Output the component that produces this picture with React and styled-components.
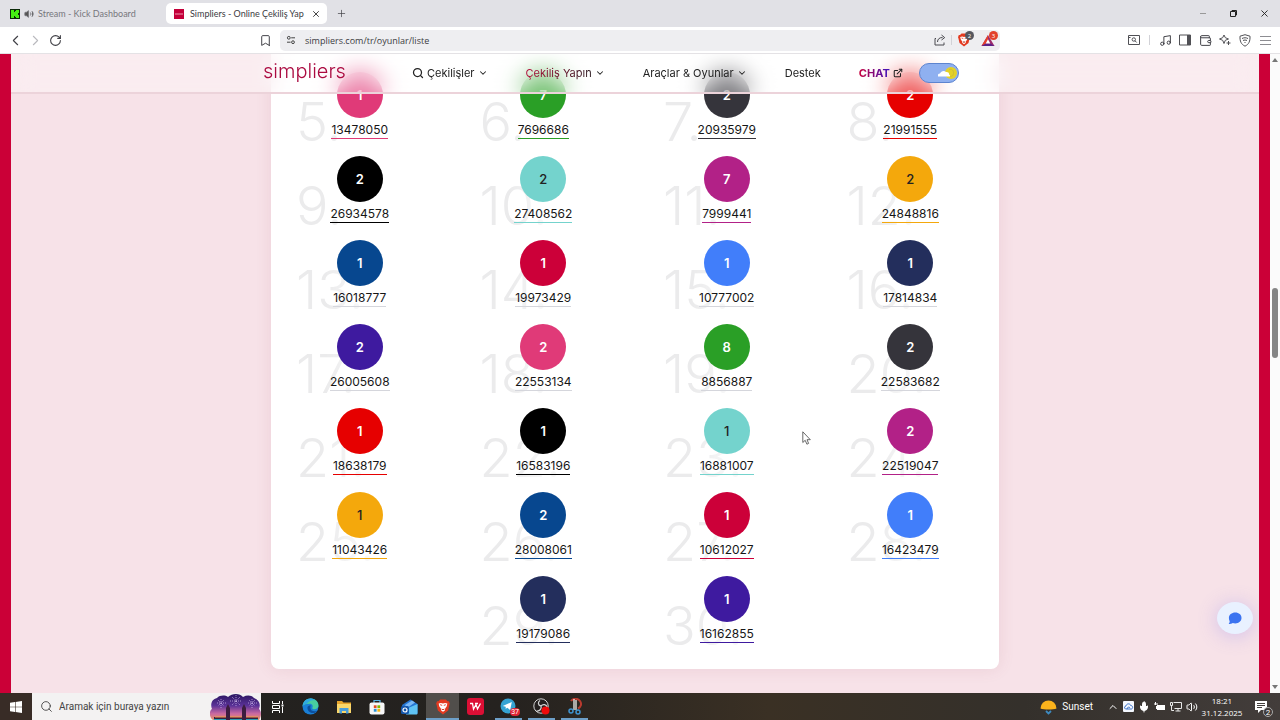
import React from 'react';
import styled, { createGlobalStyle, css } from 'styled-components';
import {
    Bookmark, ChevronDown, ChevronUp, ChevronLeft, ChevronRight, ExternalLink, Mic, Music, Plus,
    RotateCw, Search, Volume2, X, Wallet
} from 'lucide-react';


const colors = {
    pink: '#e03a78',
    green: '#2a9f26',
    charcoal: '#35343b',
    red: '#e60000',
    black: '#000000',
    teal: '#74d3cd',
    magenta: '#b22187',
    amber: '#f4a80c',
    blue: '#07478f',
    crimson: '#cc0039',
    sky: '#417efa',
    navy: '#232e5c',
    violet: '#3e1a9f'
};

const winners = [
    { rank: 5, count: 1, id: '13478050', color: 'pink' },
    { rank: 6, count: 7, id: '7696686', color: 'green' },
    { rank: 7, count: 2, id: '20935979', color: 'charcoal' },
    { rank: 8, count: 2, id: '21991555', color: 'red' },
    { rank: 9, count: 2, id: '26934578', color: 'black' },
    { rank: 10, count: 2, id: '27408562', color: 'teal' },
    { rank: 11, count: 7, id: '7999441', color: 'magenta' },
    { rank: 12, count: 2, id: '24848816', color: 'amber' },
    { rank: 13, count: 1, id: '16018777', color: 'blue' },
    { rank: 14, count: 1, id: '19973429', color: 'crimson' },
    { rank: 15, count: 1, id: '10777002', color: 'sky' },
    { rank: 16, count: 1, id: '17814834', color: 'navy' },
    { rank: 17, count: 2, id: '26005608', color: 'violet' },
    { rank: 18, count: 2, id: '22553134', color: 'pink' },
    { rank: 19, count: 8, id: '8856887', color: 'green' },
    { rank: 20, count: 2, id: '22583682', color: 'charcoal' },
    { rank: 21, count: 1, id: '18638179', color: 'red' },
    { rank: 22, count: 1, id: '16583196', color: 'black' },
    { rank: 23, count: 1, id: '16881007', color: 'teal' },
    { rank: 24, count: 2, id: '22519047', color: 'magenta' },
    { rank: 25, count: 1, id: '11043426', color: 'amber' },
    { rank: 26, count: 2, id: '28008061', color: 'blue' },
    { rank: 27, count: 1, id: '10612027', color: 'crimson' },
    { rank: 28, count: 1, id: '16423479', color: 'sky' },
    { rank: 29, count: 1, id: '19179086', color: 'navy' },
    { rank: 30, count: 1, id: '16162855', color: 'violet' }
];

// rows whose underline is a pale grey instead of the ball colour
const isPale = (rank) => rank >= 13 && rank <= 20;
const hasDarkText = (color) => color === 'teal' || color === 'amber';


const KickIcon = () => (
    <svg width='10' height='10' viewBox='0 0 10 10' aria-hidden='true'>
        <rect width='10' height='10' fill='#0b2a08' />
        <path d='M1 1h3v2h1V2h1V1h3v3H8v2h1v3H6V8H5V7H4v2H1z' fill='#45f013' />
    </svg>
);

const SimpliersIcon = () => (
    <svg width='10' height='10' viewBox='0 0 10 10' aria-hidden='true'>
        <rect width='10' height='10' fill='#c4003a' />
        <path d='M1 5h8' stroke='#ee9db4' strokeWidth='1' />
    </svg>
);

const RestoreIcon = () => (
    <svg width='9' height='9' viewBox='0 0 9 9' fill='none' stroke='#222' aria-hidden='true'>
        <path d='M1.5 2.5h5v5h-5zM3 2.5v-1h4.5V6h-1' />
    </svg>
);

const TuneIcon = () => (
    <svg width='10' height='10' viewBox='0 0 10 10' fill='none' stroke='#444' aria-hidden='true'>
        <circle cx='2.8' cy='2.8' r='1.4' />
        <path d='M5.2 2.8H9M1 7.2h3.6' />
        <circle cx='7' cy='7.2' r='1.4' />
    </svg>
);

const ShareIcon = () => (
    <svg width='12' height='12' viewBox='0 0 12 12' fill='none' stroke='#4a4a50' aria-hidden='true'>
        <path d='M2 4.500H1v6.500h9V8.500M3.500 8c0-3 2-4.500 5-4.500M7.500 1l3.200 2.600L7.500 6' />
    </svg>
);

const BraveIcon = ({ size = 14 }) => (
    <svg width={size} height={size} viewBox='0 0 14 14' aria-hidden='true'>
        <path d='M4.500.5h5L11 2h1.200l.8 2.200-.4 1L11.500 10 7 13.500 2.500 10 1.400 5.200 1 4.200 1.800 2H3z' fill='#e33a20' />
        <path d='M3.200 4l2-.5 1.800.5 1.800-.5 2 .5-.6 2.500L9 8.200 8.600 10 7 11.200 5.400 10 5 8.200 3.800 6.500z' fill='#fff' />
        <path d='M4.500 5l1.800.6M9.500 5l-1.800.6M5.800 8.800L7 9.400l1.200-.6' stroke='#e33a20' strokeWidth='.8' />
    </svg>
);

const RewardsIcon = () => (
    <svg width='14' height='13' viewBox='0 0 14 13' aria-hidden='true'>
        <path d='M7 1L.5 12h13z' fill='#9d2a6b' />
        <path d='M7 1L.5 12 5 9.500 7 5.500z' fill='#e6402a' />
        <path d='M.5 12h13L9.500 9.500H5z' fill='#5b2287' />
        <path d='M7 5.200L4.700 9.500h4.600z' fill='#fff' />
    </svg>
);

const WindowSearchIcon = () => (
    <svg width='12' height='12' viewBox='0 0 12 12' fill='none' stroke='#505055' aria-hidden='true'>
        <path d='M.5 1.500h11v9H.5zM.5 3.500h2' />
        <circle cx='5.800' cy='5.500' r='1.700' />
        <path d='M7 6.800l1.700 1.700' />
    </svg>
);

const SidePanelIcon = () => (
    <svg width='12' height='12' viewBox='0 0 12 12' aria-hidden='true'>
        <path d='M.5 1h11v10H.5z' fill='none' stroke='#505055' />
        <path d='M8 1h3.500v10H8z' fill='#505055' />
    </svg>
);

const SparkleIcon = () => (
    <svg width='12' height='12' viewBox='0 0 12 12' fill='none' stroke='#505055' strokeLinejoin='round' aria-hidden='true'>
        <path d='M5 1l1.300 2.700L9.500 5 6.300 6.300 5 9.500 3.700 6.300.5 5l3.200-1.300z' />
        <path d='M9.500 7v4M7.500 9h4' />
    </svg>
);

const ShieldIcon = () => (
    <svg width='12' height='13' viewBox='0 0 12 13' fill='none' stroke='#505055' aria-hidden='true'>
        <path d='M6 .7l5 1.500c.2 5-1 8-5 10-4-2-5.200-5-5-10z' />
        <path d='M3 4.500c2-1 4-1 6 0M4 6.500c1.300-.6 2.700-.6 4 0M5.500 8.500h1' />
    </svg>
);

const MenuIcon = () => (
    <svg width='11' height='11' viewBox='0 0 11 11' stroke='#8d8d92' aria-hidden='true'>
        <path d='M0 1.500h11M0 5.500h11M0 9.500h11' />
    </svg>
);

const CloudSunIcon = () => (
    <svg width='20' height='16' viewBox='0 0 20 16' aria-hidden='true'>
        <circle cx='13' cy='8' r='6' fill='#e3d127' />
        <path d='M11 4.500c2.500-1 5 1 4.500 4s-3 3.500-4.500 2.500' fill='none' stroke='#cdbb3a' />
        <path d='M0 11.500c-1-1.500.3-3 2-3C3 6 6 5 8 7c2-.4 3.500 1 3 2.500 1 .4 1.300 1.200 1 2z' fill='#fff' />
    </svg>
);

const BubbleIcon = () => (
    <svg width='14' height='13' viewBox='0 0 14 13' aria-hidden='true'>
        <path d='M7.300.6c3.600 0 6.200 2.300 6.200 5.400s-2.600 5.400-6.200 5.400c-.9 0-1.800-.2-2.600-.5-1 .8-2.400 1-4 1 .7-.8 1.100-1.700 1-2.600C1.200 8.400.9 7.300.9 6 .9 2.900 3.700.6 7.300.6z' fill='#3b73f0' />
    </svg>
);

const CursorIcon = () => (
    <svg width='9' height='14' viewBox='0 0 9 14' aria-hidden='true'>
        <path d='M.8.800v10.700l2.400-2.200 1.700 3.900 1.700-.8L5 8.700h3.300z' fill='#fff' stroke='#444' strokeWidth='.8' />
    </svg>
);

const WindowsIcon = () => (
    <svg width='12' height='12' viewBox='0 0 12 12' fill='#fff' aria-hidden='true'>
        <path d='M0 1.700l5-.7v4.700H0zM5.600.9L12 0v5.700H5.600zM0 6.300h5V11l-5-.7zM5.600 6.300H12V12l-6.400-.9z' />
    </svg>
);

const FireworksArt = () => (
    <svg width='51' height='26' viewBox='0 0 51 26' aria-hidden='true'>
        <defs>
            <linearGradient id='dusk' x1='0' y1='0' x2='0' y2='1'>
                <stop offset='0' stopColor='#2a1560' />
                <stop offset='.45' stopColor='#5b3298' />
                <stop offset='.75' stopColor='#c868a0' />
                <stop offset='1' stopColor='#e99268' />
            </linearGradient>
        </defs>
        <path d='M3 26C-1 23-1 17 2 15c-2-5 0-10 5-11 3-3 8-3 11-1 4-4 12-4 15 0 4-2 8-2 11 1 5 2 7 6 5 11 3 3 2 8 0 11z' fill='url(#dusk)' />
        <path d='M4 26v-3h12v-9l2-4 2 4v9h12v-9l2-4 2 4v9h12v3z' fill='#3b1d3e' />
        <path d='M5 23h11M20 23h12M36 23h12' stroke='#ef9a4a' />
        <path d='M4 25.500h12M20 25.500h12M36 25.500h12' stroke='#28a0b4' />
        <g stroke='#e7d7ff' strokeWidth='.6' strokeDasharray='1 1'>
            <path d='M26 1v12M20 7h12M22 3l8 8M30 3l-8 8M11 5v9M7 9h9M8 6l6 6M14 6l-6 6M42 5v9M38 9h9M39 6l6 6M45 6l-6 6' />
        </g>
    </svg>
);

const TaskViewIcon = () => (
    <svg width='12' height='12' viewBox='0 0 12 12' fill='none' stroke='#fff' aria-hidden='true'>
        <path d='M.5 0v2.500h7V0M.5 4.500h7v3h-7zM.5 12V9.500h7V12M10.500 0v3M10.500 6v6' />
        <path d='M9.500 3.500h2v2h-2z' fill='#fff' stroke='none' />
    </svg>
);

const EdgeIcon = () => (
    <svg width='17' height='17' viewBox='0 0 17 17' aria-hidden='true'>
        <circle cx='8.500' cy='8.500' r='8' fill='#1a7fd6' />
        <path d='M.6 8C1 3.500 4.500.5 8.500.5c4.500 0 8 3 8 6.800 0 2.500-2 4-4.200 4-1.500 0-2.500-.7-2-1.500 1-1.500.2-4-2.600-4C4.500 5.800 1.500 6.500.6 8z' fill='#48ce9f' />
        <path d='M.6 8C1 3.500 4.500.5 8.500.5c2 0 3.500.6 5 1.600C10 2 7 3 5 5.800 3 6 1.300 7 .6 8z' fill='#2fa9e0' />
        <path d='M5.500 9c-.5 4 3 6.500 6.500 6 1.500-.3 2.600-1 3.300-2.200-3 1.400-7 .2-7-3.300 0-1.200.6-1.800 1-2-1.800-.3-3.500.2-3.800 1.500z' fill='#0c4f9d' />
    </svg>
);

const FolderIcon = () => (
    <svg width='16' height='14' viewBox='0 0 16 14' aria-hidden='true'>
        <path d='M1 1h5l1.500 1.500H15V13H1z' fill='#e8a52c' />
        <path d='M1 4h14v9H1z' fill='#fbd76a' />
        <path d='M3.500 8h9v5.500h-2.500V11H6v2.500H3.500z' fill='#4a9edb' />
    </svg>
);

const StoreIcon = () => (
    <svg width='16' height='16' viewBox='0 0 16 16' aria-hidden='true'>
        <path d='M5 4V1.500h6V4' fill='none' stroke='#5bb8e8' strokeWidth='1.200' />
        <rect x='.5' y='3.500' width='15' height='12' rx='2' fill='#f7f7f7' />
        <path d='M4.800 6.300h2.800v2.800H4.800z' fill='#e44c26' />
        <path d='M8.400 6.300h2.800v2.800H8.400z' fill='#7fba00' />
        <path d='M4.800 9.900h2.800v2.800H4.800z' fill='#2a93d5' />
        <path d='M8.400 9.900h2.800v2.800H8.400z' fill='#f6b513' />
    </svg>
);

const OutlookIcon = () => (
    <svg width='17' height='16' viewBox='0 0 17 16' aria-hidden='true'>
        <path d='M1 6l8.500-5.500L16.500 5v9.500H3z' fill='#2474d2' />
        <path d='M6 9.500L16.500 5v9c0 1-.5 1.500-1.500 1.500H5z' fill='#5fc3f4' />
        <path d='M4 6l7-4.500 3 2L6 9z' fill='#7ab8f5' />
        <rect x='0' y='7' width='8' height='8' rx='1.500' fill='#1557ac' />
        <circle cx='4' cy='11' r='2' fill='none' stroke='#fff' strokeWidth='1.200' />
    </svg>
);

const WpsIcon = () => (
    <svg width='17' height='17' viewBox='0 0 17 17' aria-hidden='true'>
        <rect width='17' height='17' rx='3' fill='#dc0f35' />
        <path d='M3 5.500h2.500L6.500 11l2.500-4.500L10.500 11 13.500 5.500M8 5.500h3' fill='none' stroke='#fff' strokeWidth='1.300' />
    </svg>
);

const TelegramIcon = () => (
    <svg width='18' height='18' viewBox='0 0 18 18' aria-hidden='true'>
        <circle cx='8' cy='8' r='7.500' fill='#35a3d3' />
        <path d='M2.800 8l9-4-1.600 8-3-2.200-1.500 1.300v-2.300z' fill='#fff' />
    </svg>
);

const ObsIcon = () => (
    <svg width='17' height='17' viewBox='0 0 17 17' fill='none' aria-hidden='true'>
        <circle cx='8' cy='8' r='7.200' fill='#24201f' stroke='#d3d3d3' />
        <path d='M8 8C5 7.500 4.500 4 7 2.500M8 8c2-2.500 5.500-1.500 6 1M8 8c1 3-1.500 5.500-4.500 5' stroke='#d3d3d3' strokeWidth='1.300' />
        <circle cx='12.500' cy='12.500' r='4' fill='#ef0a0a' />
    </svg>
);

const SnipIcon = () => (
    <svg width='16' height='17' viewBox='0 0 16 17' fill='none' aria-hidden='true'>
        <path d='M4 3C6 0 11 0 13 3s1 6-2 7.500' stroke='#b93a2e' strokeWidth='2' />
        <path d='M7 1v11M9 2v10' stroke='#f0f0f0' strokeWidth='1.300' />
        <circle cx='4' cy='13' r='2' stroke='#3f94d1' strokeWidth='1.500' />
        <circle cx='11' cy='14' r='2' stroke='#3f94d1' strokeWidth='1.500' />
    </svg>
);

const SunsetIcon = () => (
    <svg width='17' height='17' viewBox='0 0 17 17' aria-hidden='true'>
        <path d='M.5 10.500a8 8 0 1 1 16 0c-3 1.300-13 1.300-16 0z' fill='#fbb31c' />
        <path d='M6 13l2.500 2.500L11 13' fill='none' stroke='#3d8ac0' strokeWidth='1.800' />
    </svg>
);

const CloudTrayIcon = () => (
    <svg width='11' height='11' viewBox='0 0 11 11' aria-hidden='true'>
        <rect width='11' height='11' rx='1' fill='#f4f8ff' />
        <path d='M2.500 8C.8 7 1.500 5 3 5c.3-2.500 4-3 4.700-.5C10 4.500 10.200 7.500 8.500 8zM4 8c0-2 2.500-2.500 3-1' fill='none' stroke='#3c73c9' />
    </svg>
);

const BatteryIcon = () => (
    <svg width='12' height='10' viewBox='0 0 12 10' aria-hidden='true'>
        <path d='M3 3h8v5H3z' fill='#fff' />
        <path d='M0 2h4M1.500 0v3M2.500 4v3' stroke='#fff' />
    </svg>
);

const NetworkIcon = () => (
    <svg width='12' height='11' viewBox='0 0 12 11' fill='none' stroke='#e8e8e8' aria-hidden='true'>
        <path d='M3.500 1.500h8v6h-7M8 8v2M5.500 10h5M.5 1.500h2v3h-2zM1.500 5v4.500H4' />
    </svg>
);

const NoticeIcon = () => (
    <svg width='12' height='12' viewBox='0 0 12 12' aria-hidden='true'>
        <path d='M0 0h12v9H6l-3 3V9H0z' fill='#fff' />
        <path d='M2 2.500h8M2 4.500h8M2 6.500h5' stroke='#45403d' />
    </svg>
);


const Winner = ({ rank, count, id, color }) => (
    <WinnerItem>
        <Rank>{rank}.</Rank>
        <Ball $color={colors[color]} $dark={hasDarkText(color)}>{count}</Ball>
        <WinnerLink href='#' $color={isPale(rank) ? '#d5d6dc' : colors[color]}>{id}</WinnerLink>
    </WinnerItem>
);

const BrowserTabs = () => (
    <TabStrip>
        <Tab $quiet>
            <KickIcon />
            <Volume2 size={10} fill='#555' />
            <span>Stream - Kick Dashboard</span>
        </Tab>
        <Tab $active>
            <SimpliersIcon />
            <span>Simpliers - Online Çekiliş Yap</span>
            <TabClose aria-label='Close tab'><X size={10} /></TabClose>
        </Tab>
        <NewTab aria-label='New tab'><Plus size={11} strokeWidth={1.500} /></NewTab>
        <WindowControls>
            <WindowButton aria-label='Minimize'><Dash /></WindowButton>
            <WindowButton aria-label='Restore'><RestoreIcon /></WindowButton>
            <WindowButton aria-label='Close'><X size={11} strokeWidth={2} /></WindowButton>
        </WindowControls>
    </TabStrip>
);

const BrowserToolbar = () => (
    <Toolbar>
        <ToolGroup>
            <IconButton aria-label='Back'><ChevronLeft size={17} strokeWidth={1.500} /></IconButton>
            <IconButton aria-label='Forward' $muted><ChevronRight size={17} strokeWidth={1.500} /></IconButton>
            <IconButton aria-label='Reload'><RotateCw size={13} strokeWidth={2} /></IconButton>
            <Spacer />
            <IconButton aria-label='Bookmark'><Bookmark size={13} strokeWidth={1.800} /></IconButton>
        </ToolGroup>
        <AddressBar>
            <TuneIcon />
            <AddressInput aria-label='Address' defaultValue='simpliers.com/tr/oyunlar/liste' spellCheck={false} />
            <ShareIcon />
            <Divider $tight />
            <BadgeButton aria-label='Shields'><BraveIcon /><Count $color='#55565e'>2</Count></BadgeButton>
            <BadgeButton aria-label='Rewards'><RewardsIcon /><Count $color='#e2412c'>3</Count></BadgeButton>
        </AddressBar>
        <ToolGroup $end>
            <IconButton aria-label='Search tabs'><WindowSearchIcon /></IconButton>
            <Divider />
            <IconButton aria-label='Playlist'><Music size={13} strokeWidth={1.800} /></IconButton>
            <IconButton aria-label='Side panel'><SidePanelIcon /></IconButton>
            <IconButton aria-label='Wallet'><Wallet size={13} strokeWidth={1.800} /></IconButton>
            <IconButton aria-label='Assistant'><SparkleIcon /></IconButton>
            <IconButton aria-label='VPN'><ShieldIcon /></IconButton>
            <IconButton aria-label='Menu'><MenuIcon /></IconButton>
        </ToolGroup>
    </Toolbar>
);

const SiteHeader = () => (
    <Header>
        <HeaderInner>
            <Logo href='#'>simpliers</Logo>
            <NavLinks>
                <NavLink href='#'><Search size={12} strokeWidth={2.500} />Çekilişler<Caret /></NavLink>
                <NavLink href='#'><Gradient $from='#b30f3b' $to='#2a1a20'>Çekiliş Yapın</Gradient><Caret /></NavLink>
                <NavLink href='#'>Araçlar &amp; Oyunlar<Caret /></NavLink>
                <NavLink href='#'>Destek</NavLink>
                <NavLink href='#'>
                    <Gradient $from='#c8003c' $to='#3a14c0' $bold>CHAT</Gradient>
                    <ExternalLink size={10} strokeWidth={2.500} />
                </NavLink>
            </NavLinks>
            <ThemeSwitch aria-label='Theme'><CloudSunIcon /></ThemeSwitch>
        </HeaderInner>
    </Header>
);

const Caret = () => <ChevronDown size={10} strokeWidth={2.500} />;

const DesktopBar = () => (
    <Taskbar>
        <StartButton aria-label='Start'><WindowsIcon /></StartButton>
        <SearchBox>
            <Search size={13} strokeWidth={1.500} />
            <SearchInput aria-label='Search' placeholder='Aramak için buraya yazın' />
            <FireworksArt />
        </SearchBox>
        <TaskButton aria-label='Task view'><TaskViewIcon /></TaskButton>
        <TaskButton aria-label='Edge'><EdgeIcon /></TaskButton>
        <TaskButton aria-label='Explorer'><FolderIcon /></TaskButton>
        <TaskButton aria-label='Store'><StoreIcon /></TaskButton>
        <TaskButton aria-label='Mail'><OutlookIcon /></TaskButton>
        <TaskButton aria-label='Brave' $active $open><BraveIcon size={16} /></TaskButton>
        <TaskButton aria-label='WPS'><WpsIcon /></TaskButton>
        <TaskButton aria-label='Telegram' $open><TelegramIcon /><TaskBadge>37</TaskBadge></TaskButton>
        <TaskButton aria-label='OBS' $open><ObsIcon /></TaskButton>
        <TaskButton aria-label='Snipping tool' $open><SnipIcon /></TaskButton>
        <Spacer />
        <Weather><SunsetIcon />Sunset</Weather>
        <Tray>
            <ChevronUp size={12} />
            <CloudTrayIcon />
            <Mic size={12} fill='#fff' />
            <BatteryIcon />
            <NetworkIcon />
            <Volume2 size={12} />
        </Tray>
        <Clock><span>18:21</span><span>31.12.2025</span></Clock>
        <Notices aria-label='Notifications'><NoticeIcon /><NoticeCount>2</NoticeCount></Notices>
    </Taskbar>
);

const App = () => {

    return (
        <Screen>
            <GlobalStyle />
            <BrowserTabs />
            <BrowserToolbar />
            <Viewport>
                <Page>
                    <SiteHeader />
                    <Card>
                        <WinnerList>
                            {winners.map((winner) => <Winner key={winner.rank} {...winner} />)}
                        </WinnerList>
                    </Card>
                    <ChatButton aria-label='Chat'><BubbleIcon /></ChatButton>
                    <Pointer><CursorIcon /></Pointer>
                </Page>
                <ScrollTrack>
                    <ScrollArrow />
                    <ScrollThumb />
                    <ScrollArrow $down />
                </ScrollTrack>
            </Viewport>
            <DesktopBar />
        </Screen>
    );
}

export default App;

const GlobalStyle = createGlobalStyle`
    * {
        box-sizing: border-box;
    }
    body {
        margin: 0;
        overflow: hidden;
    }
    button, input {
        font: inherit;
        color: inherit;
        border: none;
        background: none;
        padding: 0;
        margin: 0;
    }
    a {
        color: inherit;
        text-decoration: none;
    }
    svg {
        flex: none;
    }
`;

const center = css`
    display: flex;
    align-items: center;
    justify-content: center;
`;

const Screen = styled.div`
    display: flex;
    flex-direction: column;
    height: 100vh;
    font-family: 'Open Sans', 'Noto Sans', sans-serif;
    font-size: 9px;
    color: #3c3c42;
    background: #fff;
`;

const Spacer = styled.div`
    flex: 1;
`;

const TabStrip = styled.div`
    display: flex;
    align-items: center;
    height: 27px;
    font-family: Lato, 'Open Sans', sans-serif;
    background: #e1e1e6;
`;

const Tab = styled.div`
    display: flex;
    align-items: center;
    gap: 6px;
    height: 21px;
    padding: 0 5px 0 8px;
    border-radius: 5px;
    white-space: nowrap;
    width: 161px;
    background: ${p => p.$active ? '#fff' : 'transparent'};

    ${p => p.$quiet && css`
        gap: 4px;
        padding-left: 10px;
        width: 166px;
        color: #77777d;
    `}
`;

const TabClose = styled.button`
    ${center}
    width: 12px;
    height: 12px;
    margin-left: auto;
    color: #222;
`;

const IconButton = styled.button`
    ${center}
    width: 20px;
    height: 20px;
    color: ${p => p.$muted ? '#b9b9be' : '#3f3f45'};
`;

const NewTab = styled(IconButton)`
    margin-left: 4px;
`;

const WindowControls = styled.div`
    display: flex;
    margin-left: auto;
`;

const WindowButton = styled.button`
    ${center}
    width: 31px;
    height: 27px;
    color: #222;
`;

const Dash = styled.span`
    width: 6px;
    height: 1px;
    background: #999;
`;

const Toolbar = styled.div`
    display: grid;
    grid-template-columns: 280px 1fr 280px;
    align-items: center;
    height: 27px;
    background: #fff;
    border-bottom: 1px solid #e4e2e5;
`;

const ToolGroup = styled.div`
    display: flex;
    align-items: center;
    padding: 0 5px;
    justify-content: ${p => p.$end ? 'flex-end' : 'flex-start'};
`;

const AddressBar = styled.div`
    display: flex;
    align-items: center;
    height: 21px;
    padding-left: 6px;
    border-radius: 5px;
    background: #eeeef1;
`;

const AddressInput = styled.input`
    flex: 1;
    min-width: 0;
    margin-left: 9px;
    outline: none;
`;

const Divider = styled.span`
    width: 1px;
    height: 10px;
    margin: ${p => p.$tight ? '0 0 0 5px' : '0 5px'};
    background: #d2d2d7;
`;

const BadgeButton = styled.button`
    ${center}
    position: relative;
    width: 24px;
    height: 20px;
`;

const Count = styled.span`
    ${center}
    position: absolute;
    top: 1px;
    right: 2px;
    width: 9px;
    height: 9px;
    border-radius: 50%;
    font-size: 6px;
    color: #fff;
    background: ${p => p.$color};
`;

const Viewport = styled.div`
    display: flex;
    flex: 1;
    min-height: 0;
`;

const Page = styled.div`
    position: relative;
    flex: 1;
    overflow: hidden;
    border: solid #cb0037;
    border-width: 0 11px;
    background: #f7e2e8;
    font-family: Inter, 'Open Sans', sans-serif;
`;

const Header = styled.header`
    position: absolute;
    z-index: 2;
    top: 0;
    left: 0;
    right: 0;
    height: 40px;
    border-bottom: 2px solid #ecd3da;
    background: rgba(255, 255, 255, 0.35);
    backdrop-filter: blur(12px);
`;

const HeaderInner = styled.div`
    display: flex;
    align-items: center;
    height: 38px;
    max-width: 744px;
    margin: 0 auto;
`;

const Logo = styled.a`
    width: 149px;
    padding-bottom: 4px;
    font-size: 20px;
    font-weight: 300;
    line-height: 24px;
    color: #ab0a40;
`;

const NavLinks = styled.nav`
    display: flex;
    gap: 38px;
`;

const NavLink = styled.a`
    display: flex;
    align-items: center;
    gap: 3px;
    font-size: 11px;
    line-height: 16px;
    white-space: nowrap;
    color: #222;
`;

const Gradient = styled.span`
    font-weight: ${p => p.$bold ? 700 : 400};
    color: transparent;
    background: linear-gradient(90deg, ${p => p.$from}, ${p => p.$to});
    background-clip: text;
`;

const ThemeSwitch = styled.button`
    ${center}
    justify-content: flex-end;
    width: 40px;
    height: 20px;
    margin-left: 16px;
    border: 1px solid #5d84cf;
    border-radius: 10px;
    background: #8fb0f0;
`;

const Card = styled.main`
    max-width: 728px;
    margin: 0 auto;
    padding: 18px 0 9px;
    border-radius: 0 0 8px 8px;
    background: #fff;
    box-shadow: 0 0 16px rgba(160, 70, 100, 0.12);
`;

const WinnerList = styled.ol`
    display: flex;
    flex-wrap: wrap;
    justify-content: center;
    margin: 0 -3px;
    padding: 0;
    list-style: none;
`;

const WinnerItem = styled.li`
    position: relative;
    display: flex;
    flex-direction: column;
    align-items: center;
    width: 25%;
    height: 84px;
`;

const Rank = styled.span`
    position: absolute;
    top: 23px;
    left: 28px;
    font-size: 54px;
    font-weight: 300;
    line-height: 54px;
    color: #ebebec;
    mask-image: linear-gradient(90deg, #000 30px, rgba(0, 0, 0, 0.4) 64px);
`;

const Ball = styled.span`
    ${center}
    position: relative;
    width: 46px;
    height: 46px;
    border-radius: 50%;
    font-size: 13px;
    font-weight: ${p => p.$dark ? 500 : 600};
    color: ${p => p.$dark ? '#222' : '#fff'};
    background: ${p => p.$color};
`;

const WinnerLink = styled.a`
    position: relative;
    margin-top: 4px;
    font-size: 12px;
    line-height: 16px;
    color: #161616;
    border-bottom: 1px solid ${p => p.$color};
`;

const ChatButton = styled.button`
    ${center}
    position: absolute;
    right: 6px;
    bottom: 59px;
    width: 36px;
    height: 32px;
    border-radius: 50%;
    background: #e9f1ff;
    box-shadow: 0 2px 20px rgba(120, 110, 240, 0.3);
`;

const Pointer = styled.div`
    position: absolute;
    top: 377px;
    left: 791px;
    line-height: 0;
`;

const ScrollTrack = styled.div`
    display: flex;
    flex-direction: column;
    align-items: center;
    justify-content: space-between;
    width: 10px;
    padding: 4px 0;
    background: #fbfbfb;
`;

const ScrollArrow = styled.span`
    border: 3px solid transparent;
    border-top-width: ${p => p.$down ? '4px' : '0'};
    border-bottom-width: ${p => p.$down ? '0' : '4px'};
    border-top-color: #777;
    border-bottom-color: #777;
`;

const ScrollThumb = styled.span`
    width: 6px;
    height: 70px;
    margin-bottom: 102px;
    border-radius: 3px;
    background: #858585;
`;

const Taskbar = styled.footer`
    display: flex;
    align-items: center;
    height: 27px;
    font-family: Roboto, 'Open Sans', sans-serif;
    font-size: 10px;
    color: #fff;
    background: linear-gradient(90deg, #22211f 0, #25221f 40%, #3a3024 60%, #34302b 80%, #433d3b 100%);
`;

const StartButton = styled.button`
    ${center}
    width: 32px;
    height: 27px;
    background: #382c26;
`;

const SearchBox = styled.label`
    display: flex;
    align-items: center;
    width: 229px;
    height: 27px;
    padding-left: 8px;
    color: #333;
    background: #f3f2f2;
`;

const SearchInput = styled.input`
    flex: 1;
    min-width: 0;
    margin-left: 6px;
    outline: none;

    &::placeholder {
        color: #444;
        opacity: 1;
    }
`;

const TaskButton = styled.button`
    ${center}
    position: relative;
    width: 33px;
    height: 27px;
    background: ${p => p.$active ? '#514e4b' : 'transparent'};

    &::after {
        content: '';
        display: ${p => p.$open ? 'block' : 'none'};
        position: absolute;
        left: ${p => p.$active ? '0' : '3px'};
        right: ${p => p.$active ? '0' : '3px'};
        bottom: 0;
        height: 2px;
        background: #6d9fc8;
    }
`;

const TaskBadge = styled.span`
    ${center}
    position: absolute;
    right: 5px;
    bottom: 4px;
    padding: 0 1px;
    height: 8px;
    border-radius: 4px;
    font-size: 7px;
    background: #df2434;
`;

const Weather = styled.div`
    display: flex;
    align-items: center;
    gap: 5px;
    margin-right: 14px;
`;

const Tray = styled.div`
    display: flex;
    align-items: center;
    gap: 4px;
`;

const Clock = styled.time`
    display: flex;
    flex-direction: column;
    align-items: center;
    width: 48px;
    font-family: 'Open Sans', sans-serif;
    font-size: 8px;
    line-height: 12px;
`;

const Notices = styled.button`
    ${center}
    position: relative;
    width: 30px;
    height: 27px;
    margin-right: 4px;
`;

const NoticeCount = styled.span`
    ${center}
    position: absolute;
    right: 3px;
    bottom: 3px;
    width: 10px;
    height: 10px;
    border: 1px solid #aaa;
    border-radius: 50%;
    font-size: 8px;
    background: #3f3a38;
`;
